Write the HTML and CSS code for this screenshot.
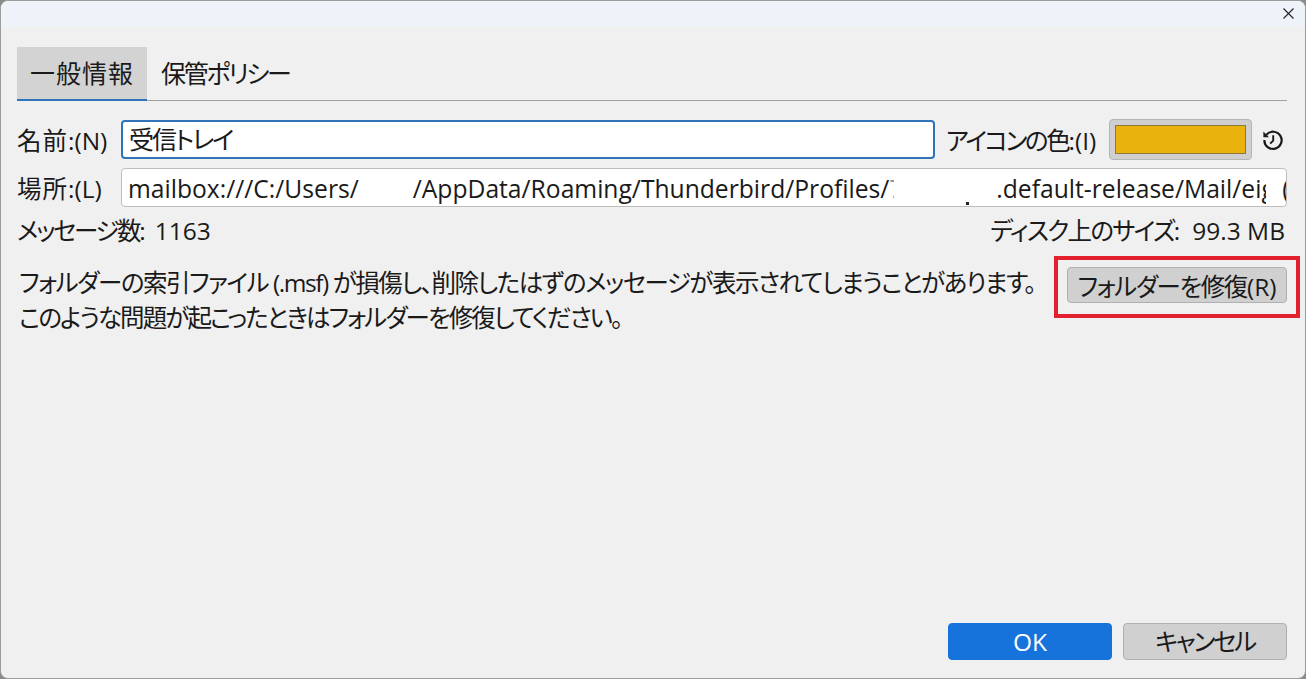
FILE: index.html
```html
<!DOCTYPE html>
<html lang="ja">
<head>
<meta charset="utf-8">
<title>フォルダーのプロパティ</title>
<link rel="stylesheet" href="styles.css">
</head>
<body>
<div class="window">
  <header class="titlebar">
    <svg class="close" width="13" height="13" viewBox="0 0 13 13"><path d="M1.5 1.5l10 10M11.5 1.5l-10 10" stroke="#222" stroke-width="1.1" fill="none"/></svg>
  </header>
  <main class="content">
    <nav class="tabs">
      <div class="tab active">一般情報</div>
      <div class="tab second">保管ポリシー</div>
    </nav>
    <div class="row name-row">
      <label class="label"><span class="wide">名前</span>:(N)</label>
      <div class="field focused">受信トレイ</div>
      <span class="color-label"><span class="tighter">アイコンの色</span>:(I)</span>
      <div class="swatch"><div class="swatch-fill"></div></div>
      <svg class="reset" width="22" height="22" viewBox="0 0 22 22"><path d="M4.4 5.8A8.6 8.6 0 1 1 2.4 11" fill="none" stroke="#1a1a1a" stroke-width="2.2"/><path d="M1.4 2.6v5.6h5.6z" fill="#1a1a1a"/><path d="M11.2 6.2V11.6L8.2 14.6" fill="none" stroke="#1a1a1a" stroke-width="1.9"/></svg>
    </div>
    <div class="row path-row">
      <label class="label"><span class="wide">場所</span>:(L)</label>
      <div class="field path"><span>mailbox:///C:/Users/</span><span class="gap-a"></span><span>/AppData/Roaming/Thunderbird/Profiles/</span><span class="frag">7</span><span class="gap-b"></span><span>.default-release/Mail/</span><span class="clip">eig</span><span class="gap-c"></span><span class="clip-end">(</span><i class="speck"></i></div>
    </div>
    <div class="row stats">
      <span class="stat-left"><span class="tighter">メッセージ数</span>:<span class="value">1163</span></span>
      <span><span class="tight">ディスク上のサイズ</span>:<span class="value">99.3 MB</span></span>
    </div>
    <section class="repair">
      <p class="repair-text"><span class="line-one">フォルダーの索引ファイル (.msf) が損傷し、削除したはずのメッセージが表示されてしまうことがあります。</span><span class="line-two">このような問題が起こったときはフォルダーを修復してください。</span></p>
      <button class="btn repair-btn"><span class="tight-s">フォルダーを修復</span>(R)</button>
      <div class="highlight"></div>
    </section>
    <footer class="actions">
      <button class="btn primary">OK</button>
      <button class="btn cancel">キャンセル</button>
    </footer>
  </main>
</div>
</body>
</html>
```
FILE: styles.css
```css
* { box-sizing: border-box; }
html, body { margin: 0; height: 100%; background: #8a8a8a; }
body {
  font-family: "Open Sans", "Noto Sans CJK JP", sans-serif;
  font-size: 24.5px;
  font-feature-settings: "palt";
  color: #1a1a1a;
  overflow: hidden;
}
.window {
  width: 1306px;
  height: 679px;
  display: flex;
  flex-direction: column;
  background: #f0f0f0;
  border: 1px solid #9c9c9c;
  border-radius: 8px;
  overflow: hidden;
}
.titlebar {
  height: 25px;
  flex: none;
  background: #eef3fa;
  display: flex;
  justify-content: flex-end;
  align-items: center;
  padding-right: 10px;
}
.content {
  flex: 1;
  display: flex;
  flex-direction: column;
  padding: 21px 18px 18px 16px;
  min-height: 0;
}
.tabs {
  display: flex;
  height: 54px;
  flex: none;
  border-bottom: 1px solid #a0a0a0;
}
.tab {
  height: 54px;
  padding: 0 14px;
  font-size: 25px;
  line-height: 52px;
  white-space: nowrap;
}
.tab.active {
  width: 130px;
  background: #d3d3d3;
  border-bottom: 2px solid #2f74b8;
  text-align: center;
  padding: 0;
  letter-spacing: 1px;
}
.tab.second { letter-spacing: -2.3px; }
.row { display: flex; align-items: center; }
.label { width: 104px; flex: none; white-space: nowrap; }
.wide { letter-spacing: 1px; }
.tight { letter-spacing: -1.7px; }
.tighter { letter-spacing: -2.3px; }
.tight-s { letter-spacing: -1.4px; }
.name-row { margin-top: 18px; height: 41px; }
.path-row { margin-top: 8px; height: 39px; }
.field {
  height: 39px;
  background: #fff;
  border: 1px solid #bdbdbd;
  border-radius: 4px;
  line-height: 37px;
  padding-left: 7px;
  white-space: nowrap;
  overflow: hidden;
}
.focused {
  width: 814px;
  border: 2px solid #2f74b8;
  line-height: 35px;
  font-size: 25px;
  letter-spacing: -2px;
  padding-left: 6px;
}
.color-label { margin-left: 11px; width: 163px; flex: none; white-space: nowrap; }
.swatch {
  width: 143px;
  height: 41px;
  flex: none;
  background: #cfcfcf;
  border: 1px solid #b5b5b5;
  border-radius: 4px;
  padding: 5px;
}
.swatch-fill { height: 100%; background: #e9b20c; border: 1px solid #8c7a3a; }
.reset { margin-left: 10px; flex: none; }
.path { flex: 1; display: flex; min-width: 0; padding-left: 6px; font-size: 24.65px; line-height: 40px; position: relative; }
.path span { flex: none; }
.gap-a { width: 54px; }
.frag { width: 5px; overflow: hidden; opacity: .45; }
.gap-b { width: 102px; }
.clip { width: 25px; overflow: hidden; }
.gap-c { width: 16px; }
.clip-end { width: 4px; overflow: hidden; }
.speck { position: absolute; left: 844px; top: 33px; width: 3px; height: 3px; background: #222; }
.stats { margin-top: 6px; height: 32px; justify-content: space-between; padding: 0 2px 0 0; white-space: nowrap; }
.value { margin-left: 12px; }
.stat-left .value { margin-left: 9px; }
.repair {
  position: relative;
  display: flex;
  justify-content: space-between;
  margin-top: 20px;
}
.repair-text { margin: 0; padding-left: 2px; line-height: 35px; white-space: nowrap; }
.line-one { display: block; letter-spacing: -1.45px; }
.line-two { display: block; letter-spacing: -1.9px; }
.btn {
  font: inherit;
  font-feature-settings: inherit;
  color: #1a1a1a;
  background: #d0d0d0;
  border: 1px solid #b0b0b0;
  border-radius: 4px;
  padding: 0;
  flex: none;
  white-space: nowrap;
}
.repair-btn { width: 220px; height: 36px; line-height: 32px; margin-top: 2px; padding-top: 3px; }
.highlight {
  position: absolute;
  right: -13px;
  top: -9px;
  width: 246px;
  height: 62px;
  border: 4px solid #e3202e;
}
.actions {
  margin-top: auto;
  display: flex;
  justify-content: flex-end;
  gap: 11px;
}
.actions .btn { width: 164px; height: 37px; line-height: 33px; }
.actions .cancel { letter-spacing: -2.2px; }
.actions .primary { background: #1673dc; border-color: #1673dc; color: #fff; }
```
